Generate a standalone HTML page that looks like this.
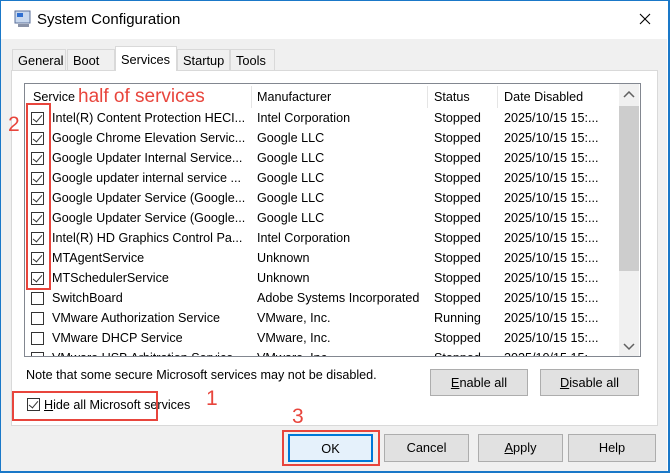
<!DOCTYPE html>
<html><head><style>
*{margin:0;padding:0;box-sizing:border-box}
body{width:670px;height:473px;overflow:hidden;background:#fff;font-family:"Liberation Sans",sans-serif;font-size:12.6px;color:#000;position:relative}
.a{position:absolute;white-space:nowrap}
.win{position:absolute;left:0;top:0;width:670px;height:473px;border:2px solid #1a78c8;border-left-width:1px;border-top-width:1px}
.body{position:absolute;left:1px;top:39px;width:666px;height:432px;background:#f0f0f0}
.tab{position:absolute;top:49px;height:21px;border:1px solid #d9d9d9;border-bottom:none;background:#f0f0f0;padding:3px 5px 0;font-size:12.8px}
.cb{position:absolute;width:13px;height:13px;border:1px solid #333;background:#fff}
.cb.k::after{content:"";position:absolute;left:3px;top:0px;width:4px;height:8px;border:solid #333;border-width:0 1.3px 1.3px 0;transform:rotate(40deg)}
.btn{position:absolute;background:#e1e1e1;border:1px solid #adadad;text-align:center;font-size:12.8px}
.red{position:absolute;border:2px solid #e8453c}
.rt{position:absolute;color:#e8453c;font-size:21px}
</style></head><body>
<div class="win"></div>
<div class="body"></div>
<svg class="a" style="left:13px;top:9px" width="20" height="20"><rect x="2" y="2" width="15" height="12" fill="#c8d8ee" stroke="#5a6f99"/><rect x="4" y="4" width="6" height="4" fill="#2f6fd0"/><rect x="5" y="15" width="11" height="3" fill="#8a93a8"/></svg>
<div class="a" style="left:37px;top:11px;font-size:15px">System Configuration</div>
<svg class="a" style="left:639px;top:13px" width="12" height="12"><path d="M1 1L11 11M11 1L1 11" stroke="#000" stroke-width="1.1"/></svg>
<div class="a" style="left:11px;top:70px;width:647px;height:356px;background:#fff;border:1px solid #d9d9d9"></div>
<div class="tab" style="left:12px;width:54px">General</div>
<div class="tab" style="left:67px;width:48px">Boot</div>
<div class="tab" style="left:115px;top:46px;height:25px;width:62px;background:#fff;padding-top:5px">Services</div>
<div class="tab" style="left:177px;width:53px">Startup</div>
<div class="tab" style="left:230px;width:45px">Tools</div>
<div class="a" style="left:24px;top:83px;width:617px;height:274px;border:1px solid #828790;background:#fff;overflow:hidden">
<div class="a" style="left:226px;top:2px;width:1px;height:22px;background:#e5e5e5"></div>
<div class="a" style="left:402px;top:2px;width:1px;height:22px;background:#e5e5e5"></div>
<div class="a" style="left:472px;top:2px;width:1px;height:22px;background:#e5e5e5"></div>
<div class="a" style="left:8px;top:6px">Service</div>
<div class="a" style="left:232px;top:6px">Manufacturer</div>
<div class="a" style="left:409px;top:6px">Status</div>
<div class="a" style="left:479px;top:6px">Date Disabled</div>
<div id="rows"></div>
<div class="a" style="left:594px;top:0;width:20px;height:272px;background:#f0f0f0"></div>
<div class="a" style="left:594px;top:22px;width:20px;height:165px;background:#cdcdcd"></div>
<svg class="a" style="left:598px;top:7px" width="12" height="8"><path d="M1 6L6 1L11 6" stroke="#606060" stroke-width="1.5" fill="none"/></svg>
<svg class="a" style="left:598px;top:259px" width="12" height="8"><path d="M1 1L6 6L11 1" stroke="#606060" stroke-width="1.5" fill="none"/></svg>
</div>
<div class="a" style="left:78px;top:86px;font-size:19px;color:#e8453c">half of services</div>
<div class="a" style="left:26px;top:368px">Note that some secure Microsoft services may not be disabled.</div>
<div class="btn" style="left:430px;top:369px;width:98px;height:27px;line-height:25px"><u>E</u>nable all</div>
<div class="btn" style="left:540px;top:369px;width:99px;height:27px;line-height:25px"><u>D</u>isable all</div>
<div class="cb k" style="left:27px;top:398px"></div>
<div class="a" style="left:44px;top:398px"><u>H</u>ide all Microsoft services</div>
<div class="red" style="left:12px;top:391px;width:146px;height:30px"></div>
<div class="rt" style="left:206px;top:387px">1</div>
<div class="rt" style="left:8px;top:113px">2</div>
<div class="rt" style="left:292px;top:405px">3</div>
<div class="red" style="left:26px;top:103px;width:25px;height:187px"></div>
<div class="red" style="left:282px;top:430px;width:98px;height:36px"></div>
<div class="btn" style="left:288px;top:434px;width:85px;height:28px;line-height:26px;border:2px solid #0078d7;background:#e5f1fb">OK</div>
<div class="btn" style="left:384px;top:434px;width:85px;height:28px;line-height:26px">Cancel</div>
<div class="btn" style="left:478px;top:434px;width:85px;height:28px;line-height:26px"><u>A</u>pply</div>
<div class="btn" style="left:568px;top:434px;width:88px;height:28px;line-height:26px">Help</div>
<script>
var d=[["Intel(R) Content Protection HECI...","Intel Corporation","Stopped",1],["Google Chrome Elevation Servic...","Google LLC","Stopped",1],["Google Updater Internal Service...","Google LLC","Stopped",1],["Google updater internal service ...","Google LLC","Stopped",1],["Google Updater Service (Google...","Google LLC","Stopped",1],["Google Updater Service (Google...","Google LLC","Stopped",1],["Intel(R) HD Graphics Control Pa...","Intel Corporation","Stopped",1],["MTAgentService","Unknown","Stopped",1],["MTSchedulerService","Unknown","Stopped",1],["SwitchBoard","Adobe Systems Incorporated","Stopped",0],["VMware Authorization Service","VMware, Inc.","Running",0],["VMware DHCP Service","VMware, Inc.","Stopped",0],["VMware USB Arbitration Service","VMware, Inc.","Stopped",0]];
var h="";d.forEach(function(r,i){var y=27+i*20;h+='<div class="cb'+(r[3]?' k':'')+'" style="left:6px;top:'+(y+1)+'px"></div><div class="a" style="left:27px;top:'+y+'px">'+r[0]+'</div><div class="a" style="left:232px;top:'+y+'px">'+r[1]+'</div><div class="a" style="left:409px;top:'+y+'px">'+r[2]+'</div><div class="a" style="left:479px;top:'+y+'px">2025/10/15 15:...</div>';});
document.getElementById("rows").innerHTML=h;
</script>
</body></html>
